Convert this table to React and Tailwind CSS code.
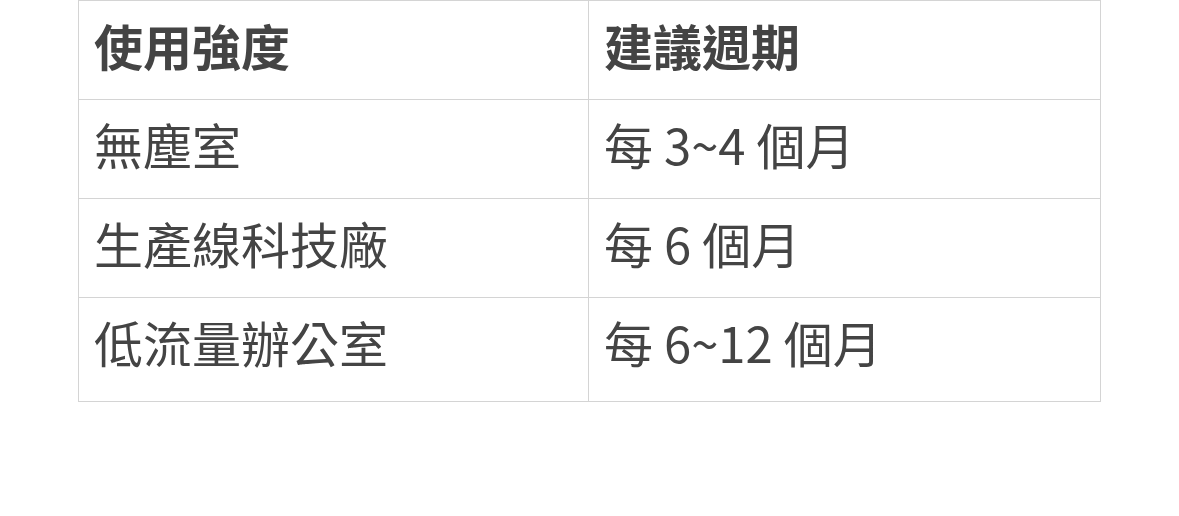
const rows = [
  ["無塵室", "每 3~4 個月"],
  ["生產線科技廠", "每 6 個月"],
  ["低流量辦公室", "每 6~12 個月"],
];

export default function App() {
  return (
    <div
      className="w-[1179px] h-[516px] bg-white pl-[78px] pr-[78px] text-[#444444]"
      style={{ fontFamily: '"Noto Sans CJK TC", "Noto Sans", sans-serif' }}
    >
      <table className="w-[1023px] border-collapse text-[49px] leading-none">
        <thead>
          <tr className="h-[99px]">
            <th className="w-[510px] border border-[#d4d4d4] pl-[15px] pr-4 pb-[12px] text-left font-bold align-middle">使用強度</th>
            <th className="border border-[#d4d4d4] pl-[15px] pr-4 pb-[12px] text-left font-bold align-middle">建議週期</th>
          </tr>
        </thead>
        <tbody>
          {rows.map(([a, b], i) => (
            <tr key={a} className={i === rows.length - 1 ? "h-[104px]" : "h-[99px]"}>
              <td className={`border border-[#d4d4d4] pl-[15px] pr-4 text-left font-normal ${i === rows.length - 1 ? "pb-[17px]" : "pb-[12px]"}`}>{a}</td>
              <td className={`border border-[#d4d4d4] pl-[15px] pr-4 text-left font-normal ${i === rows.length - 1 ? "pb-[17px]" : "pb-[12px]"}`}>{b}</td>
            </tr>
          ))}
        </tbody>
      </table>
    </div>
  );
}
